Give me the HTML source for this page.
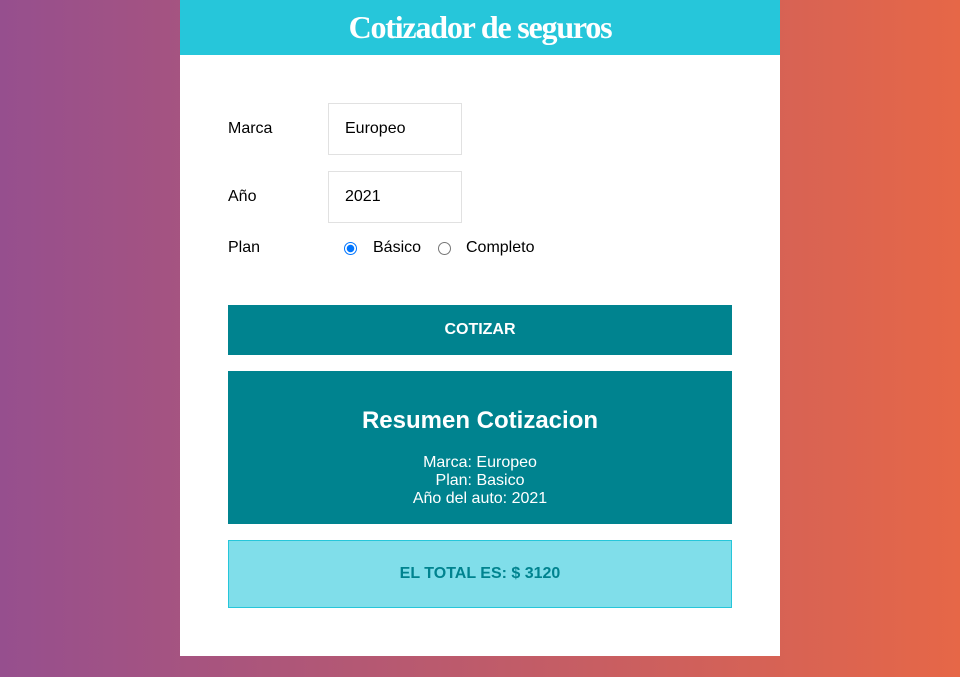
<!DOCTYPE html>
<html><head><meta charset="utf-8"><style>
*{box-sizing:border-box;margin:0;padding:0}
body{width:960px;height:677px;overflow:hidden;background:linear-gradient(to right,#964f8e 0%,#e66747 100%);font-family:"Liberation Sans",Arial,sans-serif;font-size:16px;color:#000}
.card{position:absolute;left:180px;top:0;width:600px;height:656px;background:#fff}
.hdr{height:55px;background:#26c6da;color:#fff;text-align:center;font-family:"Liberation Serif",serif;font-weight:bold;font-size:32px;line-height:54px;letter-spacing:-1.2px}
.lbl{position:absolute;left:48px}
.inp{position:absolute;left:148px;width:134px;height:52px;border:1px solid #e1e1e1;padding-left:16px;line-height:50px}
.radio{position:absolute;width:13px;height:13px;border-radius:50%;border:1px solid #767676;top:242px}
.btn{position:absolute;left:48px;width:504px;background:#00838f;color:#fff;text-align:center}
</style></head><body>
<div class="card">
<div class="hdr">Cotizador de seguros</div>
<div class="lbl" style="top:120px">Marca</div>
<div class="inp" style="top:103px">Europeo</div>
<div class="lbl" style="top:188px">Año</div>
<div class="inp" style="top:171px">2021</div>
<div class="lbl" style="top:239px">Plan</div>
<div class="radio" style="left:164px;border:1px solid #0075ff;background:radial-gradient(circle,#0075ff 0 3.5px,#fff 4px)"></div>
<div style="position:absolute;left:193px;top:239px">Básico</div>
<div class="radio" style="left:258px"></div>
<div style="position:absolute;left:286px;top:239px">Completo</div>
<div class="btn" style="top:305px;height:50px;line-height:50px;font-weight:bold">COTIZAR</div>
<div class="btn" style="top:371px;height:153px">
<div style="font-size:24px;font-weight:bold;margin-top:36px">Resumen Cotizacion</div>
<div style="margin-top:19px;line-height:18px">Marca: Europeo<br>Plan: Basico<br>Año del auto: 2021</div>
</div>
<div style="position:absolute;left:48px;top:540px;width:504px;height:68px;background:#80deea;border:1px solid #26c6da;color:#00838f;font-weight:bold;text-align:center;line-height:66px">EL TOTAL ES: $ 3120</div>
</div>
</body></html>
